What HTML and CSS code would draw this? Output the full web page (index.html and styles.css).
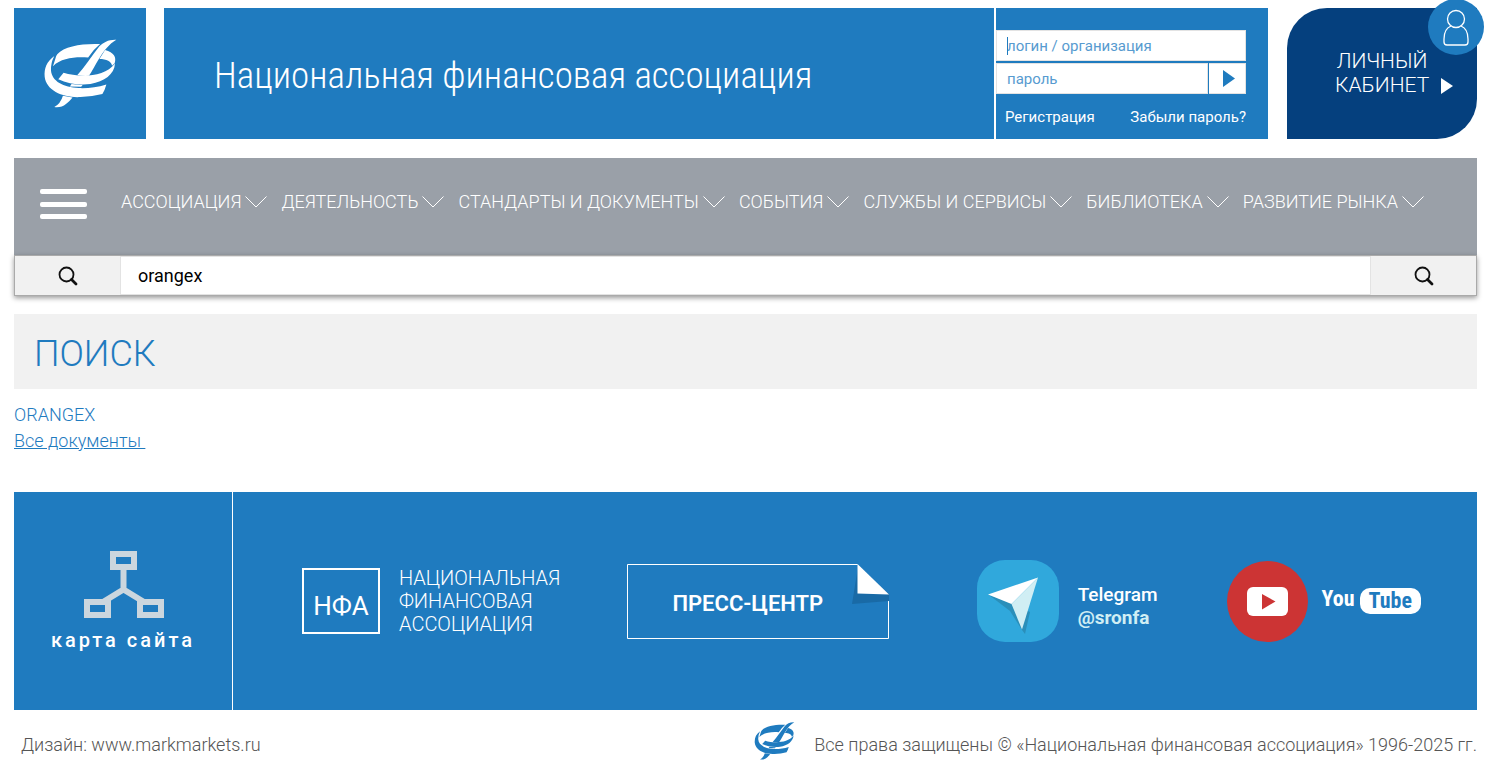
FILE: index.html
```html
<!DOCTYPE html>
<html lang="ru">
<head>
<meta charset="utf-8">
<title>Поиск — Национальная финансовая ассоциация</title>
<link rel="stylesheet" href="styles.css">
</head>
<body>
<svg class="defs" width="0" height="0" aria-hidden="true">
  <symbol id="logo" viewBox="130 118 220 208">
    <path d="M157 200L164 178Q165 170 170 164C192 139 244 131 299 133Q278 150 263 174C225 171 182 175 157 200Z"/>
    <path d="M161 169C138 186 130 206 132 232C137 275 190 296 240 293Q275 292 306 284Q313 273 318 255C290 264 262 267 235 266C188 263 154 246 151 213Q150 190 161 169Z"/>
    <path d="M348 120C324 119 309 128 297 140C273 170 254 202 230 227Q246 230 265 229C285 203 305 145 348 120Z"/>
    <path d="M314 151C341 158 349 173 343 191L335 199C334 185 318 178 297 178Z"/>
    <path d="M173 239L189 220C235 234 312 235 344 192C342 225 312 246 270 254C235 258 200 252 173 239Z"/>
    <path d="M213 254Q230 257 247 256L242 262L208 261Z"/>
    <path d="M187 289L216 294C203 309 188 327 161 323Q180 313 187 289Z"/>
  </symbol>
  <symbol id="chevron" viewBox="0 0 22 12"><path d="M.5 .5L11 11L21.500 .5" fill="none" stroke="currentColor"/></symbol>
  <symbol id="search" viewBox="0 0 20 20"><circle cx="8.500" cy="8.500" r="7" fill="none" stroke="currentColor" stroke-width="1.800"/><path d="M13.500 13.500L18 18" stroke="currentColor" stroke-width="2.800" stroke-linecap="round"/></symbol>
</svg>
<header class="header">
  <a class="logo" href="#" aria-label="НФА"><svg width="73" height="69"><use href="#logo"/></svg></a>
  <div class="title">Национальная финансовая ассоциация</div>
  <form class="login">
    <input class="field" type="text" placeholder="логин / организация" aria-label="логин / организация">
    <div class="password">
      <input class="field" type="password" placeholder="пароль" aria-label="пароль">
      <button class="enter" type="button" aria-label="Войти"><svg width="12" height="17"><path d="M0 0L12 8.500L0 17Z" fill="currentColor"/></svg></button>
    </div>
    <div class="login-links"><a href="#">Регистрация</a><a href="#">Забыли пароль?</a></div>
    <span class="caret"></span>
  </form>
  <a class="cabinet" href="#">
    <span>ЛИЧНЫЙ<br>КАБИНЕТ</span>
    <svg class="cabinet-arrow" width="12" height="16"><path d="M0 0L12 8L0 16Z" fill="currentColor"/></svg>
    <span class="user"><svg width="26" height="37" viewBox="0 0 26 37" fill="none" stroke="currentColor" stroke-width="1.300"><circle cx="13" cy="10" r="8.500"/><path d="M8 17C3 19 1 25 1 30V33Q1 36 4 36H22Q25 36 25 33V30C25 25 23 19 18 17"/></svg></span>
  </a>
</header>
<nav class="nav">
  <button class="burger" type="button" aria-label="Меню"><span></span><span></span><span></span></button>
  <ul class="menu">
    <li><a href="#">АССОЦИАЦИЯ<svg width="22" height="12"><use href="#chevron"/></svg></a></li>
    <li><a href="#">ДЕЯТЕЛЬНОСТЬ<svg width="22" height="12"><use href="#chevron"/></svg></a></li>
    <li><a href="#">СТАНДАРТЫ И ДОКУМЕНТЫ<svg width="22" height="12"><use href="#chevron"/></svg></a></li>
    <li><a href="#">СОБЫТИЯ<svg width="22" height="12"><use href="#chevron"/></svg></a></li>
    <li><a href="#">СЛУЖБЫ И СЕРВИСЫ<svg width="22" height="12"><use href="#chevron"/></svg></a></li>
    <li><a href="#">БИБЛИОТЕКА<svg width="22" height="12"><use href="#chevron"/></svg></a></li>
    <li><a href="#">РАЗВИТИЕ РЫНКА<svg width="22" height="12"><use href="#chevron"/></svg></a></li>
  </ul>
</nav>
<form class="search">
  <button type="button" aria-label="Искать"><svg width="20" height="20"><use href="#search"/></svg></button>
  <input type="text" value="orangex" aria-label="Поиск">
  <button type="button" aria-label="Найти"><svg width="20" height="20"><use href="#search"/></svg></button>
</form>
<main>
  <h1>ПОИСК</h1>
  <div class="results">
    <div>ORANGEX</div>
    <a href="#">Все документы&nbsp;</a>
  </div>
</main>
<section class="banner">
  <a class="sitemap" href="#">
    <svg width="82" height="67" viewBox="0 0 82 67" fill="none" stroke="#cbd6de" stroke-width="6"><path d="M31 3H52V16H31ZM5 51H26V64H5ZM58 51H79V64H58ZM41.500 16V39M21 51L41.500 38.500L62 51"/></svg>
    <span>карта сайта</span>
  </a>
  <div class="partners">
    <a class="nfa" href="#"><span class="nfa-box">НФА</span><span class="nfa-name">НАЦИОНАЛЬНАЯ<br>ФИНАНСОВАЯ<br>АССОЦИАЦИЯ</span></a>
    <a class="press" href="#">
      <svg viewBox="0 0 262 75" width="262" height="75"><path d="M230.500 .5H.5V74.500H261.500V30" fill="none" stroke="#fff"/><path d="M231 3L225 40L262 37V30Z" fill="#196aa6"/><path d="M230.500 0L262 30.500L230.500 29.500Z" fill="#fff"/></svg>
      <span>ПРЕСС-ЦЕНТР</span>
    </a>
    <a class="telegram" href="#">
      <svg width="82" height="82" viewBox="0 0 82 82"><rect width="82" height="82" rx="28" fill="#30a8dc"/><path d="M12 35L33 51L45 70L48 74L53 52L35 43Z" fill="#2a8fba"/><path d="M11 34.500L61 17.500L34.500 44Z" fill="#fff"/><path d="M61 17.500L34.500 44L45 69.500Z" fill="#d0eef4"/></svg>
      <span>Telegram<br><b>@sronfa</b></span>
    </a>
    <a class="youtube" href="#">
      <svg width="81" height="81" viewBox="0 0 81 81"><circle cx="40.500" cy="40.500" r="40.500" fill="#cc3434"/><rect x="20" y="26" width="41" height="29" rx="6" fill="#fff"/><path d="M35 33L48.500 40.500L35 48.500Z" fill="#cc3434"/></svg>
      <span class="you">You</span><span class="tube">Tube</span>
    </a>
  </div>
</section>
<footer class="footer">
  <a href="#">Дизайн: www.markmarkets.ru</a>
  <div class="copyright"><svg width="41" height="38"><use href="#logo"/></svg><span>Все права защищены © «Национальная финансовая ассоциация» 1996-2025 гг.</span></div>
</footer>
</body>
</html>
```
FILE: styles.css
```css
* { box-sizing: border-box; }
body { margin: 0; padding: 8px 22px 0 14px; background: #fff; color: #1f7bbf; font: 300 18px/26px Roboto, "Liberation Sans", sans-serif; }
a { color: inherit; text-decoration: none; }
svg { display: block; flex: none; }
button, input { font: inherit; margin: 0; border: 0; border-radius: 0; outline: 0; }
.defs { position: absolute; }
.header { display: flex; height: 131px; color: #fff; }
.logo { width: 132px; margin-right: 18px; background: #1f7bbf; display: grid; place-items: center; fill: #fff; }
.title { flex: 1; margin-right: 2px; padding: 5px 0 0 50px; background: #1f7bbf; display: flex; align-items: center; font: 300 37px/44px "Roboto Condensed", Roboto, sans-serif; white-space: nowrap; }
.login { position: relative; width: 272px; margin-right: 19px; padding: 22px 22px 0 0; background: #1f7bbf; font-weight: 400; font-size: 15px; line-height: 20px; }
.field { display: block; flex: 1; min-width: 0; width: 100%; height: 31px; padding: 0 10px; border: 1px solid #e3e3e3; background: #fff; color: #1f7bbf; }
.field::placeholder { color: #579bd0; opacity: 1; }
.password { display: flex; gap: 1px; margin-top: 2px; }
.enter { width: 37px; height: 31px; border: 1px solid #e3e3e3; border-left: 0; background: #fff; color: #1f7bbf; display: grid; place-items: center; padding: 0 0 0 3px; }
.login-links { display: flex; justify-content: space-between; margin-top: 13px; padding-left: 9px; }
.caret { position: absolute; left: 11px; top: 29px; width: 1px; height: 18px; background: #1f7bbf; }
.cabinet { position: relative; width: 190px; padding: 41px 0 0 48px; border-radius: 40px 0 40px 0; background: #05407e; font-size: 21px; line-height: 24px; display: flex; align-items: flex-start; gap: 12px; text-align: center; }
.cabinet-arrow { margin-top: 29px; }
.user { position: absolute; right: -7px; top: -9px; width: 56px; height: 56px; border-radius: 50%; background: #1f7bbf; display: grid; place-items: center; }
.nav { display: flex; margin-top: 19px; height: 97px; padding: 31px 20px 0 26px; background: #9aa0a8; color: #fff; }
.burger { width: 47px; height: 30px; margin-right: 34px; padding: 0; background: none; display: flex; flex-direction: column; justify-content: space-between; }
.burger span { width: 100%; height: 5px; border-radius: 2px; background: #fff; }
.menu { display: flex; gap: 14px; margin: 0; padding: 0; list-style: none; white-space: nowrap; }
.menu a { display: flex; align-items: center; gap: 4px; }
.search { display: flex; height: 41px; border: 1px solid #aaa; box-shadow: 0 2px 5px rgba(0,0,0,.4); background: #fff; color: #000; }
.search button { width: 105px; background: #f1f1f1; color: #111; display: grid; place-items: center; padding: 0; }
.search input { flex: 1; min-width: 0; padding: 0 17px; border: 1px solid #e3e3e3; font-weight: 400; color: #000; }
h1 { margin: 18px 0 0; height: 75px; padding: 5px 20px 0; background: #f1f1f1; font-weight: 300; font-size: 36px; line-height: 70px; }
.results { padding: 13px 0 38px; }
.results a { text-decoration: underline; }
.banner { display: flex; height: 218px; background: #1f7bbf; color: #fff; }
.sitemap { width: 219px; border-right: 1px solid #fff; display: flex; flex-direction: column; align-items: center; padding-top: 59px; gap: 9px; font-weight: 500; font-size: 20px; letter-spacing: 3px; }
.partners { flex: 1; display: grid; grid-template-columns: 325fr 350fr 250fr 194fr; align-items: center; padding: 0 56px 0 69px; white-space: nowrap; }
.nfa, .telegram, .youtube { display: flex; align-items: center; }
.nfa { gap: 19px; font-size: 20px; line-height: 23px; }
.nfa-box { width: 78px; height: 66px; padding-top: 10px; border: 2px solid #fff; display: grid; place-items: center; font-weight: 400; font-size: 26px; }
.press { display: grid; width: 262px; align-items: center; text-align: center; font-weight: 600; font-size: 22px; }
.press > * { grid-area: 1 / 1; }
.press span { padding: 5px 20px 0 0; }
.telegram { gap: 19px; font-weight: 500; font-size: 19px; line-height: 23px; }
.telegram span { padding-top: 10px; }
.telegram b { color: #d0eef4; }
.you, .tube { font: 700 22px/26px "Roboto Condensed", Roboto, sans-serif; }
.you { margin: 0 5px 4px 14px; }
.tube { padding: 0 9px; border-radius: 10px; background: #fff; color: #1f7bbf; }
.footer { display: flex; align-items: center; justify-content: space-between; padding: 12px 0 10px 7px; color: #555; white-space: nowrap; }
.footer > a, .copyright span { padding-top: 8px; }
.copyright { display: flex; align-items: center; gap: 19px; fill: #1f7bbf; }
```
